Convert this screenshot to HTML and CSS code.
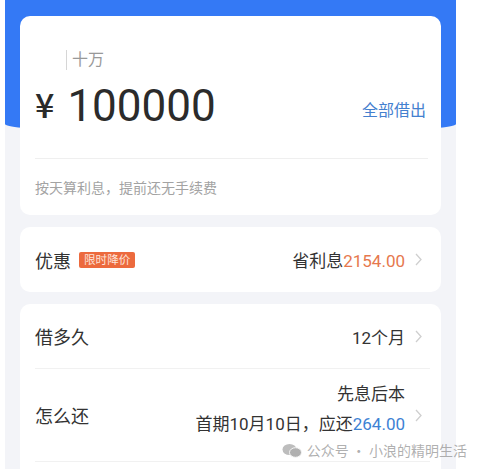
FILE: index.html
```html
<!DOCTYPE html>
<html lang="zh-CN">
  <head>
    <meta charset="UTF-8" />
    <meta name="viewport" content="width=device-width, initial-scale=1.0" />
    <title>借款</title>
    <link rel="stylesheet" href="styles.css">
  </head>
  <body>
    <main class="page">
      <section class="card amount-card">
        <p class="hint"><span class="caret"></span>十万</p>
        <div class="amount-row">
          <p class="amount"><span class="yen">¥</span>100000</p>
          <a class="all-in">全部借出</a>
        </div>
        <p class="note">按天算利息，提前还无手续费</p>
      </section>

      <section class="card">
        <div class="row">
          <p class="label">优惠<span class="badge">限时降价</span></p>
          <p class="value">省利息<span class="orange">2154.00</span></p>
          <svg class="chev" viewBox="0 0 7 13"><polyline points="1,1 6,6.5 1,12" /></svg>
        </div>
      </section>

      <section class="card last">
        <div class="row line">
          <p class="label">借多久</p>
          <p class="value">12个月</p>
          <svg class="chev" viewBox="0 0 7 13"><polyline points="1,1 6,6.5 1,12" /></svg>
        </div>
        <div class="row line tall">
          <p class="label">怎么还</p>
          <div class="value stack">
            <p>先息后本</p>
            <p>首期10月10日，应还<span class="blue">264.00</span></p>
          </div>
          <svg class="chev" viewBox="0 0 7 13"><polyline points="1,1 6,6.5 1,12" /></svg>
        </div>
      </section>

      <div class="mark">
        <svg viewBox="0 0 20 14">
          <ellipse cx="7.5" cy="6" rx="7" ry="5.6" />
          <ellipse cx="13.5" cy="9" rx="6" ry="4.8" class="front" />
        </svg>
        公众号 · 小浪的精明生活
      </div>
    </main>
  </body>
</html>
```

FILE: styles.css
```css
html,
body {
  margin: 0;
  height: 469px;
  overflow: hidden;
  background-color: #fff;
}
p {
  margin: 0;
}
.page {
  position: relative;
  width: 451px;
  height: 469px;
  margin-left: 5px;
  padding-top: 16px;
  box-sizing: border-box;
  background-color: #f3f4f8;
  font-family: Roboto, "Noto Sans CJK SC", sans-serif;
  color: #333;
}
/* blue header behind the first card */
.page::before {
  content: "";
  position: absolute;
  left: 0;
  right: 0;
  top: 0;
  height: 134px;
  background-color: #3479f5;
  border-radius: 0 0 50% 50% / 0 0 10px 10px;
}
.card {
  position: relative;
  margin: 0 15px 12px;
  background-color: #fff;
  border-radius: 10px;
}
.card.last {
  padding-bottom: 30px;
}
.amount-card {
  padding: 34px 0 17px 15px;
}
.hint {
  display: flex;
  align-items: center;
  margin-left: 31px;
  font-size: 16px;
  line-height: 20px;
  color: #999;
}
.caret {
  width: 1px;
  height: 20px;
  margin-right: 5px;
  background-color: #d6d6d6;
}
.amount-row {
  display: flex;
  align-items: center;
  justify-content: space-between;
  margin: 7px 13px 0 0;
  height: 56px;
  padding-bottom: 25px;
  border-bottom: 1px solid #efefef;
}
.amount {
  font-size: 44px;
  line-height: 56px;
  color: #2b2b2b;
}
.yen {
  font-family: "Noto Sans CJK SC", sans-serif;
  font-weight: 500;
  font-size: 34px;
  margin-right: 13px;
  vertical-align: 3px;
}
.all-in {
  margin: 8px 2px 0 0;
  font-size: 16px;
  color: #4480cf;
}
.note {
  margin-top: 19px;
  font-size: 14px;
  line-height: 20px;
  color: #a3a3a3;
}
.row {
  display: flex;
  align-items: center;
  height: 65px;
  margin: 0 11px 0 15px;
  box-sizing: border-box;
}
.row.line {
  border-bottom: 1px solid #f1f1f1;
}
.row.tall {
  height: 93px;
}
.label {
  display: flex;
  align-items: center;
  font-size: 18px;
  color: #333;
}
.badge {
  margin-left: 8px;
  padding: 0 5px;
  height: 16px;
  line-height: 16px;
  font-size: 11.6px;
  color: #fde3d8;
  background-color: #ec6a3e;
  border-radius: 2px;
}
.value {
  margin-left: auto;
  font-size: 17px;
  color: #333;
}
.stack {
  margin-bottom: 12px;
  text-align: right;
  line-height: 30px;
}
.orange {
  color: #e6784e;
}
.blue {
  color: #3d82d4;
}
.chev {
  width: 7px;
  height: 13px;
  margin-left: 10px;
  margin-right: 8px;
}
.chev polyline {
  fill: none;
  stroke: #cfcfcf;
  stroke-width: 1.3;
}
/* watermark over the bottom row */
.mark {
  position: absolute;
  right: -11px;
  bottom: 9px;
  display: flex;
  align-items: center;
  font-family: "Noto Sans CJK SC", sans-serif;
  font-size: 14px;
  color: rgba(150, 150, 150, 0.75);
}
.mark svg {
  width: 20px;
  height: 15px;
  margin-right: 5px;
}
.mark ellipse {
  fill: #bdbdbd;
}
.mark ellipse.front {
  fill: #b0b0b0;
  stroke: #f6f6f6;
  stroke-width: 1;
}
```
